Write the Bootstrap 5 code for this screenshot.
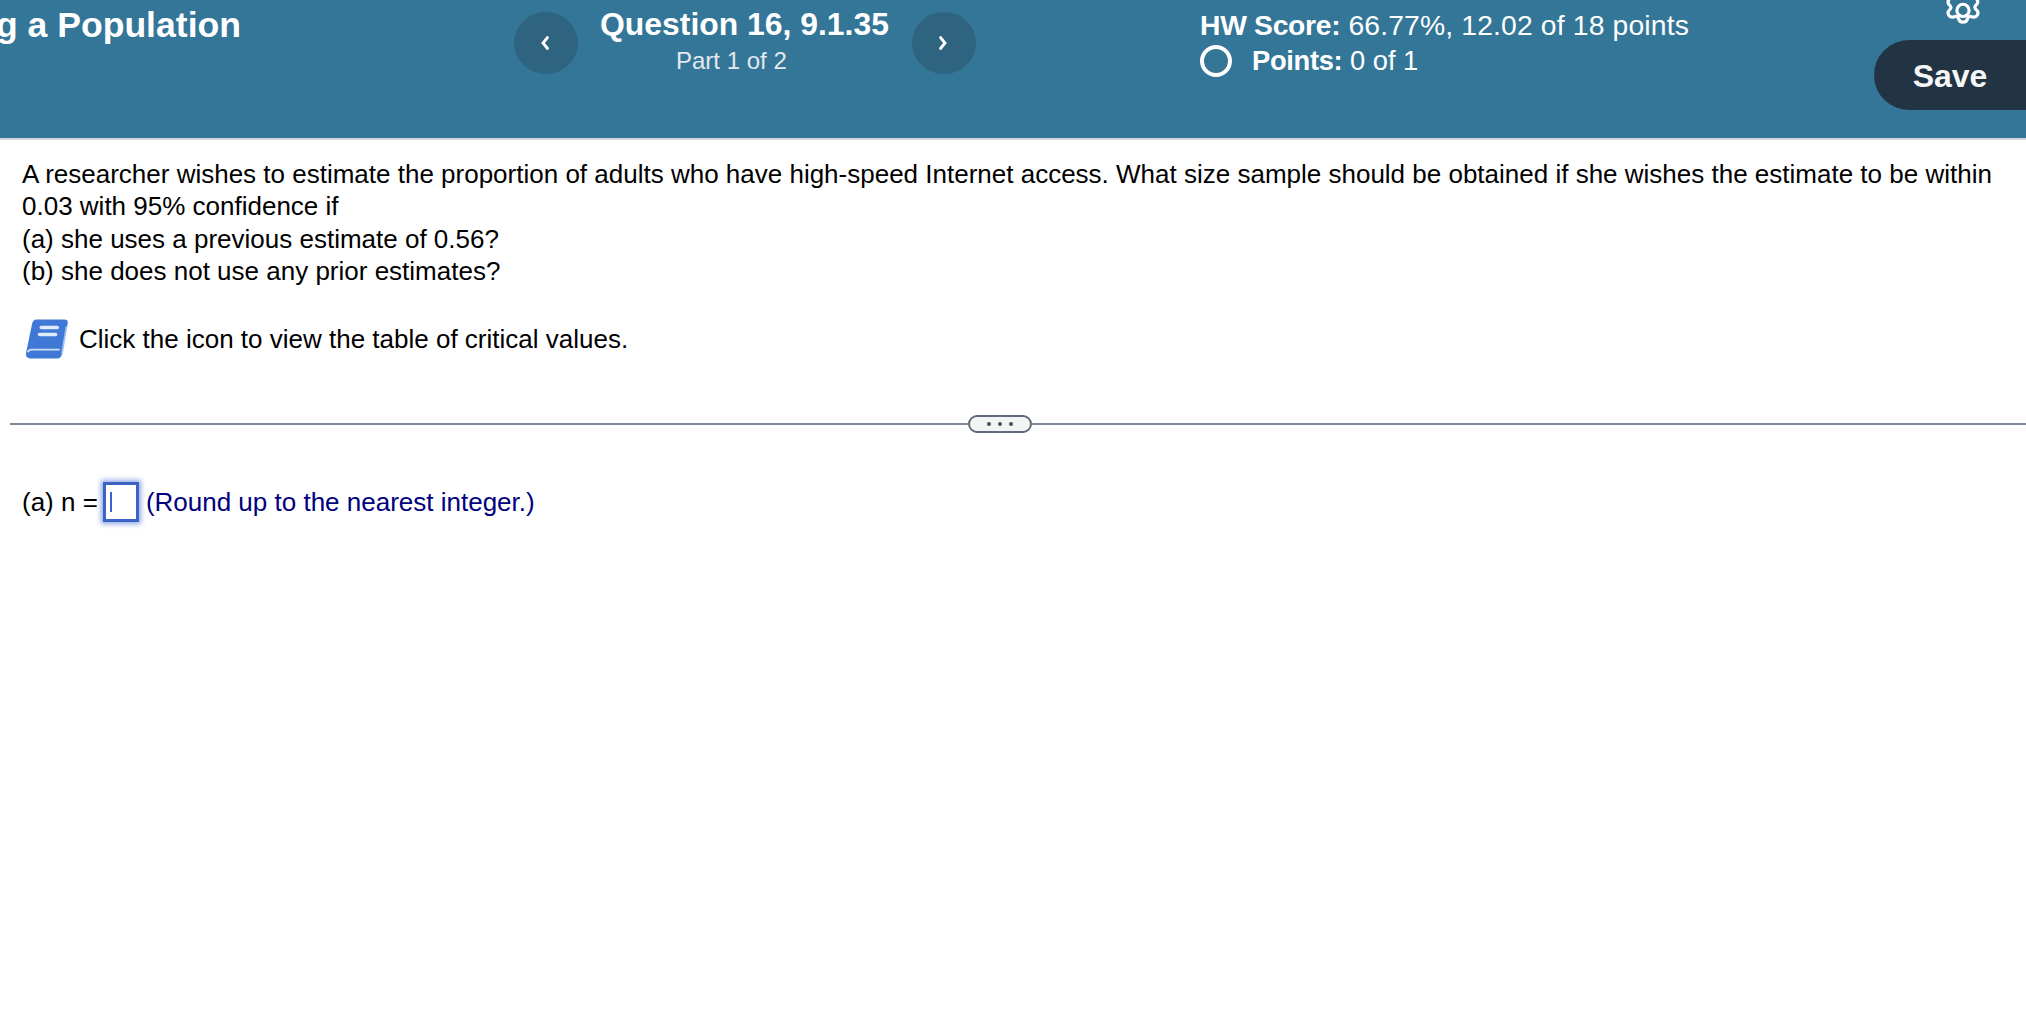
<!DOCTYPE html>
<html lang="en">
<head>
<meta charset="utf-8">
<title>Question 16</title>
<link href="https://cdn.jsdelivr.net/npm/bootstrap@5.3.0/dist/css/bootstrap.min.css" rel="stylesheet">
<style>
html,body{height:100%;background:#fff;overflow:hidden}
body{font-family:"Liberation Sans",Arial,sans-serif;color:#000}
.topbar{height:140px;background:#347697;border-bottom:2px solid #ccd6dc;color:#fff;overflow:hidden}
.titlebox{width:241px;height:50px;margin-right:273px;font-size:35.6px;font-weight:700;line-height:50px;overflow:hidden;white-space:nowrap}
.roundnav{width:64px;height:62px;margin-top:12px;border-radius:50%;background:#2e6480;border:0;padding:0 2px 0 0}
.qbox{width:334px;padding:3px 0 0 22px;white-space:nowrap}
.qtitle{font-size:31.9px;font-weight:700;line-height:42px}
.qpart{font-size:24px;line-height:32px;margin:0 0 0 76px;color:#e3e9ee}
.scorebox{width:674px;margin-left:224px;padding-top:5px;font-size:28.3px;white-space:nowrap;letter-spacing:.15px}
.scorebox b{letter-spacing:-.3px}
.scoreline{line-height:40px}
.pointline{line-height:40px;margin-top:-4px;font-size:27.3px;letter-spacing:0}
.ring{width:32px;height:32px;border:4px solid #fff;border-radius:50%;margin-right:20px}
.sidebox{width:152px;margin-left:0}
.gearwrap{height:28px;margin-left:67px;margin-top:-11px}
.savebtn{width:152px;height:70px;margin-top:23px;background:#223344;color:#f5f6f8;border:0;border-radius:35px 0 0 35px;font-size:32px;font-weight:700;padding:2px 0 0;text-align:center}
.stem{padding:18px 22px 0;font-size:26px;line-height:32.3px}
.bookline{margin-top:31px;margin-left:2px;height:42px}
.bookline svg{margin-right:9px}
.splitline{margin:55px 0 0 10px;height:18px}
.splitrule{flex:1;height:2px;background:#808a96}
.leftrule{flex:0 0 958px}
.dotpill{width:64px;height:18px;border:2px solid #5f6b79;border-radius:9px;background:#f2f4f6;gap:7px}
.dotpill i{display:block;width:4px;height:4px;border-radius:50%;background:#4a4f55}
.answerline{margin:48px 0 0 22px;font-size:26px;height:42px}
.ansbox{width:36px;height:40px;border:3px solid #3c63c6;box-shadow:0 0 5px 2px #8fa8e6;margin:0 7px 0 5px;padding:7px 0 7px 4px;background:#fff}
.caret{width:2px;height:100%;background:#3c63c6}
.hintnavy{color:#000080}
</style>
</head>
<body>
<header class="topbar d-flex align-items-start">
  <div class="titlebox d-flex justify-content-end"><span>Estimating a Population</span></div>
  <button class="roundnav d-flex align-items-center justify-content-center" aria-label="Previous">
    <svg width="12" height="18" viewBox="0 0 12 18"><path d="M8.500 3.500 4 9l4.500 5.500" fill="none" stroke="#fff" stroke-width="2.800" stroke-linecap="round"/></svg>
  </button>
  <div class="qbox">
    <div class="qtitle">Question 16, 9.1.35</div>
    <div class="qpart">Part 1 of 2</div>
  </div>
  <button class="roundnav d-flex align-items-center justify-content-center" aria-label="Next">
    <svg width="12" height="18" viewBox="0 0 12 18"><path d="M3.500 3.500 8 9l-4.500 5.500" fill="none" stroke="#fff" stroke-width="2.800" stroke-linecap="round"/></svg>
  </button>
  <div class="scorebox">
    <div class="scoreline"><b>HW Score:</b> 66.77%, 12.02 of 18 points</div>
    <div class="pointline d-flex align-items-center"><span class="ring"></span><span><b>Points:</b> 0 of 1</span></div>
  </div>
  <div class="sidebox">
    <div class="gearwrap">
      <svg width="44" height="44" viewBox="0 0 36 36" class="d-block"><path d="M18 3c2 0 3 1 3.500 3 .5 1.500 2 2 3.500 1.500 2-.8 3.500-.3 4.500 1.300 1 1.700.6 3.200-.9 4.500-1.200 1-1.200 2.400 0 3.400l.2.200c1.500 1.300 1.900 2.800.9 4.500-1 1.600-2.500 2.100-4.500 1.300-1.500-.5-3 0-3.500 1.500-.5 2-1.500 3-3.700 3s-3.200-1-3.700-3c-.5-1.500-2-2-3.500-1.500-2 .8-3.500.3-4.500-1.300-1-1.700-.6-3.200.9-4.500 1.200-1 1.200-2.500 0-3.500-1.500-1.300-1.900-2.800-.9-4.500 1-1.600 2.500-2.100 4.500-1.300C12.800 8 14.300 7.500 14.800 6c.5-2 1.500-3 3.200-3Z" fill="none" stroke="#fff" stroke-width="2.600" stroke-linejoin="round"/><circle cx="18" cy="17.500" r="5" fill="none" stroke="#fff" stroke-width="2.600"/></svg>
    </div>
    <button class="savebtn d-block">Save</button>
  </div>
</header>
<main>
  <div class="stem">
    <div>A researcher wishes to estimate the proportion of adults who have high-speed Internet access. What size sample should be obtained if she wishes the estimate to be within<br>0.03 with 95% confidence if</div>
    <div>(a) she uses a previous estimate of 0.56?</div>
    <div>(b) she does not use any prior estimates?</div>
    <div class="bookline d-flex align-items-center">
      <svg width="46" height="46" viewBox="0 0 40 40" class="flex-shrink-0"><path d="M11 3h24c2.500 0 3.500 1.200 3 3.500L33 33c-.5 2.500-2 4-4.500 4H6c-3.300 0-4.800-2-4.200-5L7 7c.5-2.700 1.800-4 4-4Z" fill="#3f78d6"/><path d="M3.500 31.500c.3-1.500 1.300-2.200 2.800-2.200H31" fill="none" stroke="#cfe0f6" stroke-width="1.600"/><path d="M37 9 33 33" stroke="#a9c4ee" stroke-width="1.500" fill="none"/><path d="M15 10h14M13.500 16h14" stroke="#dfeafa" stroke-width="3" stroke-linecap="round"/></svg>
      <span>Click the icon to view the table of critical values.</span>
    </div>
  </div>
  <div class="splitline d-flex align-items-center">
    <div class="splitrule leftrule"></div>
    <div class="dotpill d-flex align-items-center justify-content-center"><i></i><i></i><i></i></div>
    <div class="splitrule"></div>
  </div>
  <div class="answerline d-flex align-items-center">
    <span>(a) n =</span>
    <div class="ansbox"><div class="caret"></div></div>
    <span class="hintnavy">(Round up to the nearest integer.)</span>
  </div>
</main>
<script src="https://cdn.jsdelivr.net/npm/bootstrap@5.3.0/dist/js/bootstrap.bundle.min.js"></script>
</body>
</html>
